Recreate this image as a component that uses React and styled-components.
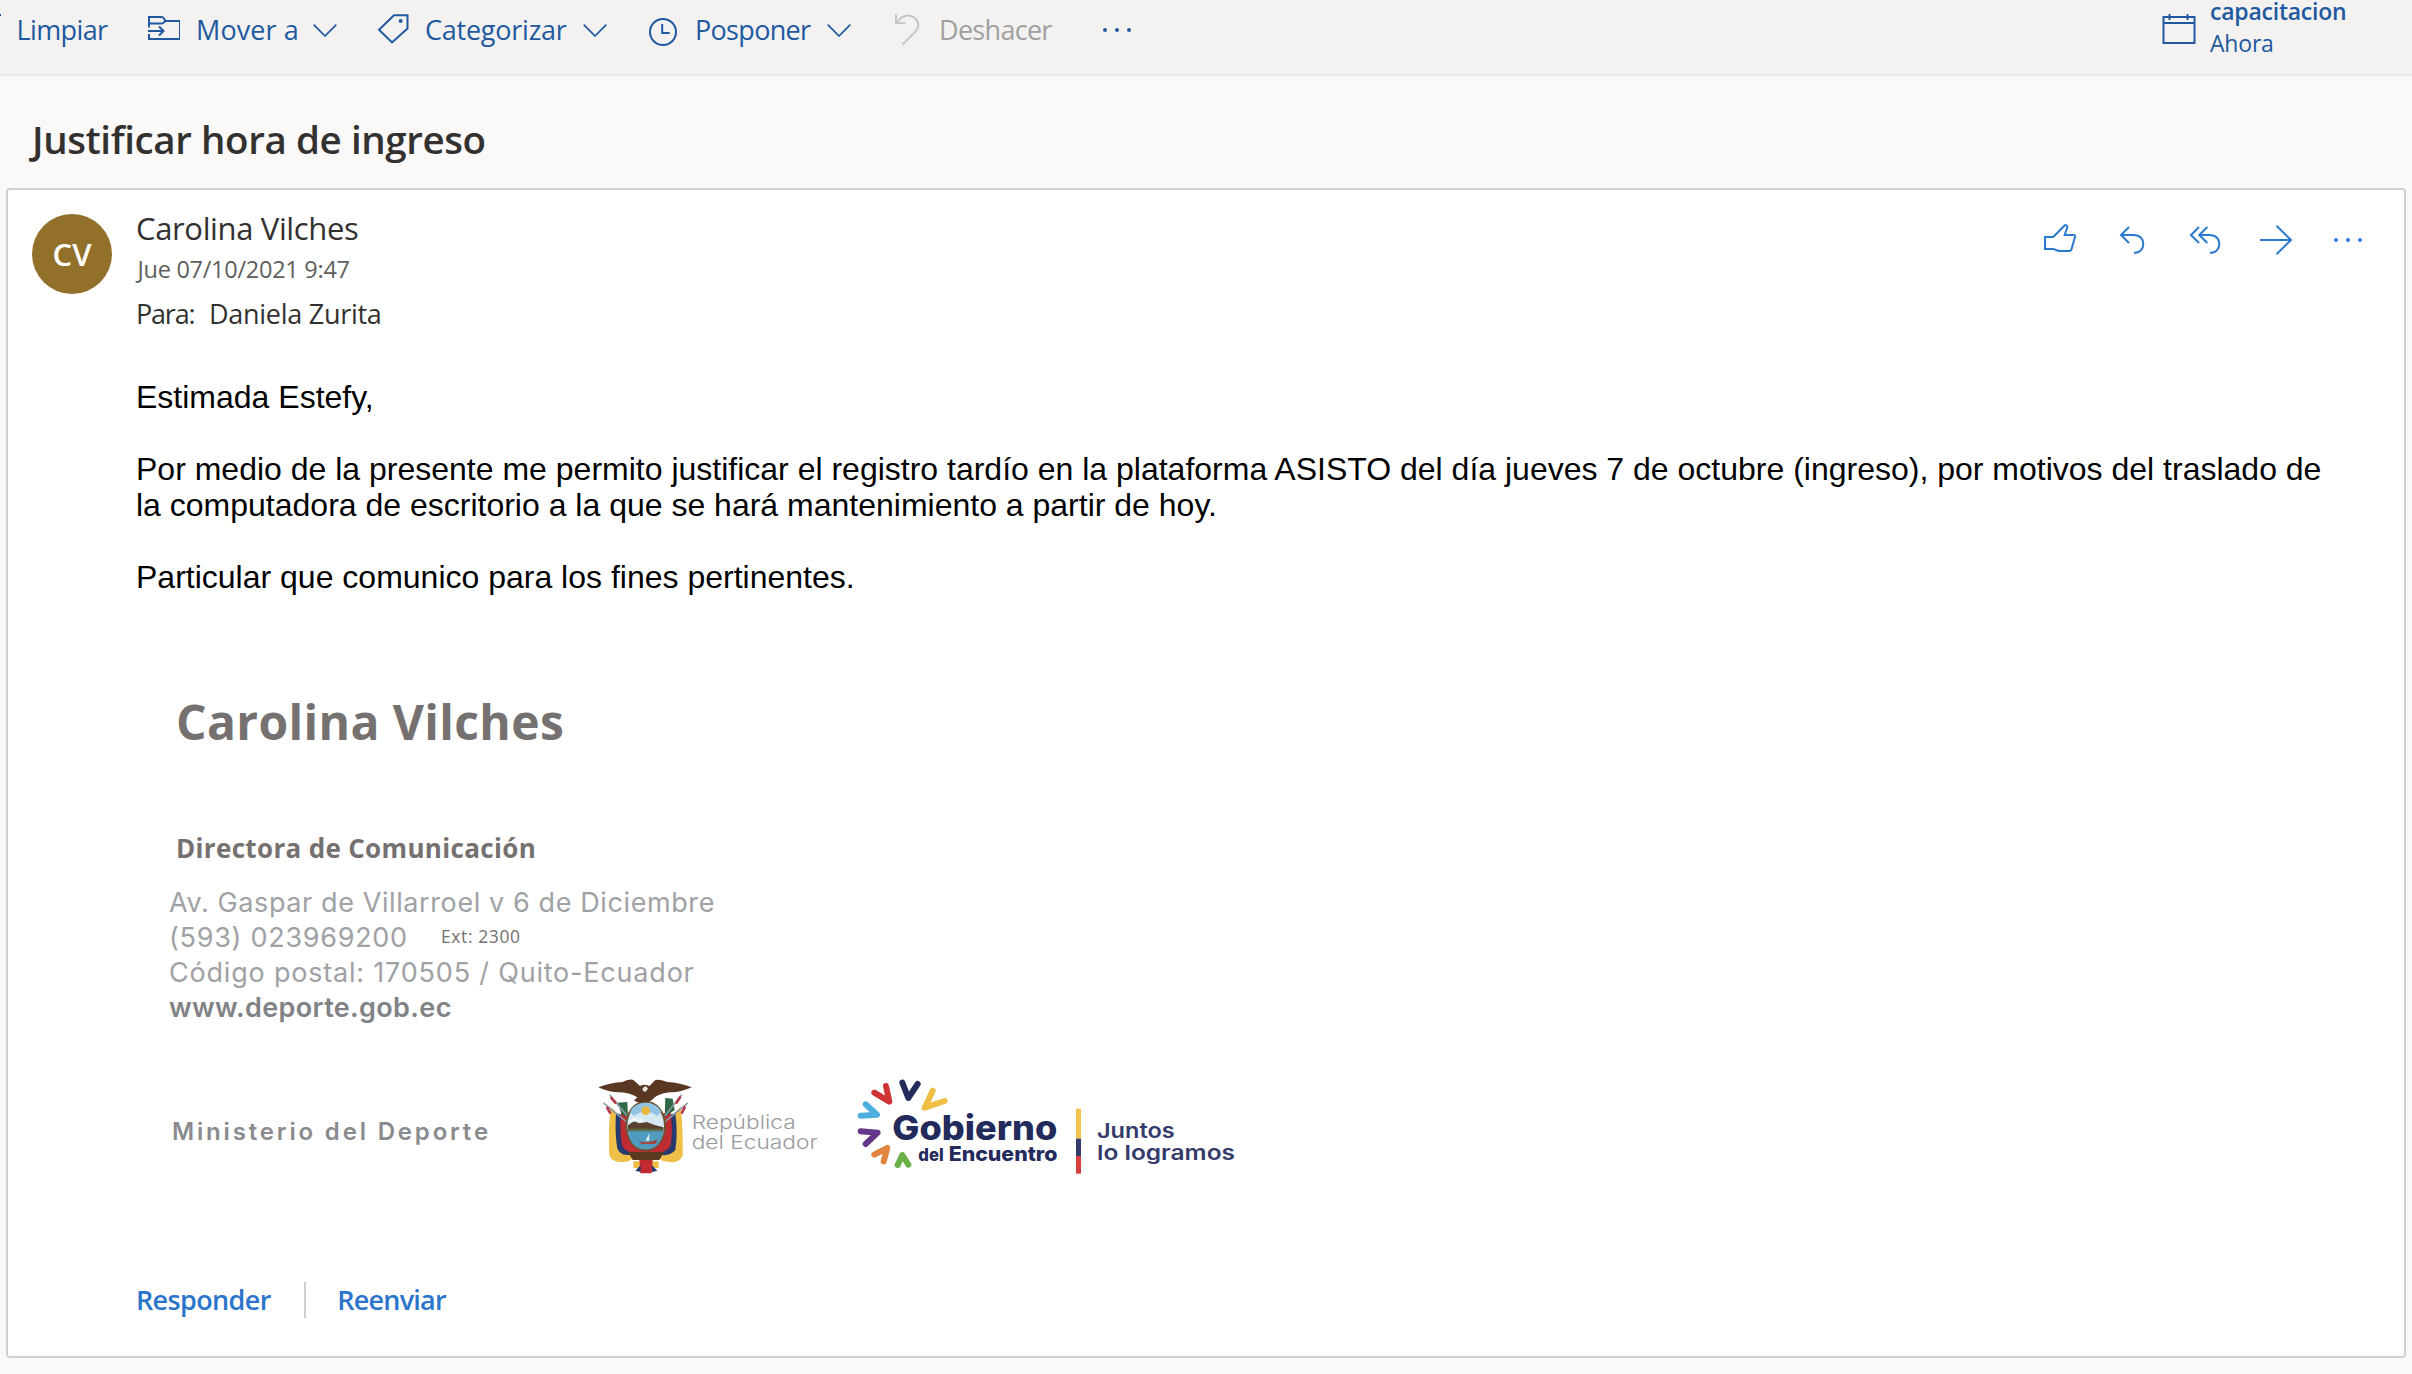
import React from "react";
import styled, { createGlobalStyle } from "styled-components";

const Global = createGlobalStyle`
  *, *::before, *::after { box-sizing: border-box; }
  html, body { margin: 0; padding: 0; }
  body {
    background: #faf9f8;
    font-family: "Open Sans", "Noto Sans", sans-serif;
    overflow: hidden;
  }
`;

const Page = styled.div`
  width: 100vw;
  height: 100vh;
  display: flex;
  flex-direction: column;
  overflow: hidden;
`;

const Toolbar = styled.header`
  flex: none;
  height: 76px;
  display: flex;
  align-items: flex-start;
  justify-content: space-between;
  padding-right: 64px;
  background: #f3f2f1;
  border-bottom: 2px solid #edebe9;
`;

const Commands = styled.div`
  height: 60px;
  display: flex;
  align-items: center;
  gap: 40px;
`;

const Command = styled.div`
  width: ${(p) => p.$width}px;
  display: flex;
  align-items: center;
  color: ${(p) => (p.$disabled ? "#a19f9d" : "#2159a0")};
`;

const CommandIcon = styled.svg`
  flex: none;
  width: 32px;
  height: 32px;
  margin-right: 16px;
  fill: none;
  stroke: ${(p) => p.$tone || "currentColor"};
  stroke-width: 2;
`;

const BroomTip = styled.svg`
  flex: none;
  width: 1px;
  height: 32px;
  margin-right: 15.5px;
  fill: currentColor;
`;

const CommandLabel = styled.span`
  font-size: 27px;
  line-height: 40px;
  white-space: nowrap;
  letter-spacing: ${(p) => p.$track || 0}px;
`;

const Chevron = styled.svg`
  flex: none;
  width: 24px;
  height: 13px;
  margin-left: auto;
  fill: none;
  stroke: currentColor;
  stroke-width: 1.7;
`;

const Reminder = styled.div`
  display: flex;
  width: 186px;
  gap: 14px;
  color: #2159a0;
`;

const CalendarIcon = styled.svg`
  flex: none;
  width: 34px;
  height: 32px;
  margin-top: 14px;
  fill: none;
  stroke: currentColor;
  stroke-width: 2;
`;

const ReminderText = styled.div`
  display: flex;
  flex-direction: column;
  margin-top: -5px;
`;

const ReminderLine = styled.span`
  font-size: 23px;
  line-height: 32px;
  white-space: nowrap;
  font-weight: ${(p) => (p.$strong ? 600 : 400)};
  letter-spacing: ${(p) => p.$track || 0}px;
`;

const Subject = styled.h1`
  flex: none;
  margin: 0;
  padding: 36px 0 0 32px;
  height: 112px;
  font-size: 38.5px;
  line-height: 54px;
  font-weight: 600;
  color: #323130;
  letter-spacing: -0.4px;
`;

const Card = styled.article`
  flex: none;
  height: 1170px;
  margin: 0 6px;
  padding: 18px 24px 0;
  display: flex;
  gap: 24px;
  background: #fff;
  border: 2px solid #d0d0d0;
  border-radius: 4px;
`;

const Avatar = styled.div`
  flex: none;
  width: 80px;
  height: 80px;
  margin-top: 6px;
  display: flex;
  align-items: center;
  justify-content: center;
  border-radius: 50%;
  background: #92702a;
  color: #fff;
  font-size: 31px;
  line-height: 40px;
  font-weight: 600;
`;

const Message = styled.div`
  flex: 1;
  min-width: 0;
  display: flex;
  flex-direction: column;
`;

const MessageHead = styled.div`
  display: flex;
  justify-content: space-between;
  align-items: flex-start;
`;

const SenderBlock = styled.div`
  display: flex;
  flex-direction: column;
`;

const Sender = styled.div`
  font-size: 31px;
  line-height: 40px;
  color: #323130;
  letter-spacing: -0.36px;
`;

const SentAt = styled.div`
  margin: 5px 0 0 1.5px;
  font-size: 23.5px;
  line-height: 32px;
  color: #605e5c;
  letter-spacing: -0.27px;
`;

const Recipients = styled.div`
  display: flex;
  margin-top: 11px;
  font-size: 27px;
  line-height: 36px;
  color: #323130;
`;

const Recipient = styled.span`
  width: ${(p) => p.$width || "auto"};
  white-space: nowrap;
  letter-spacing: ${(p) => p.$track || 0}px;
`;

const Actions = styled.div`
  display: flex;
  gap: 40px;
  padding: 16px 16px 0 0;
  color: #2b79d0;
`;

const ActionIcon = styled.svg`
  width: 32px;
  height: 32px;
  overflow: visible;
  fill: none;
  stroke: currentColor;
  stroke-width: 2;
`;

const Body = styled.div`
  margin-top: 47px;
  padding-right: 48px;
  font-family: "Liberation Sans", Arial, sans-serif;
  font-size: 32px;
  line-height: 36px;
  color: #000;
`;

const Paragraph = styled.p`
  margin: 0 0 36px;
`;

const Signature = styled.section`
  display: flex;
  flex-direction: column;
  padding-left: 34px;
  font-family: Inter, "Open Sans", sans-serif;
`;

const SignName = styled.div`
  margin: 61px 0 0 6px;
  font-family: "Open Sans", sans-serif;
  font-weight: 700;
  font-size: 48px;
  line-height: 60px;
  color: #757171;
  letter-spacing: 0.36px;
`;

const SignRole = styled.div`
  margin: 78px 0 0 6px;
  font-family: "Open Sans", sans-serif;
  font-weight: 700;
  font-size: 26px;
  line-height: 36px;
  color: #757171;
  letter-spacing: 0.33px;
`;

const SignLine = styled.div`
  display: flex;
  align-items: flex-start;
  margin-top: ${(p) => p.$gap || 0}px;
  margin-left: -1px;
  font-size: 27px;
  line-height: 35px;
  font-weight: ${(p) => (p.$strong ? 600 : 400)};
  color: ${(p) => (p.$strong ? "#808285" : "#a0a1a4")};
  white-space: pre;
  letter-spacing: ${(p) => p.$track || 0}px;
`;

const Phone = styled.span`
  width: 272px;
`;

const Extension = styled.span`
  font-family: "Open Sans", sans-serif;
  font-size: 17.5px;
  line-height: 33px;
  font-weight: 400;
  color: #757171;
  letter-spacing: 0.6px;
`;

const Logos = styled.div`
  display: flex;
  margin-top: 35px;
`;

const Ministry = styled.div`
  width: 410px;
  padding: 52px 0 0 2px;
  font-size: 24px;
  line-height: 40px;
  font-weight: 600;
  color: #8a8b8e;
  letter-spacing: 2.83px;
`;

const Logo = styled.svg`
  flex: none;
  width: ${(p) => p.$width}px;
  height: 130px;
  font-family: Inter, "Open Sans", sans-serif;
`;

const Footer = styled.footer`
  display: flex;
  align-items: center;
  margin-top: 90px;
`;

const FooterLink = styled.a`
  font-size: 27px;
  line-height: 40px;
  font-weight: 600;
  color: #2b74cc;
  letter-spacing: ${(p) => p.$track || 0}px;
`;

const Divider = styled.span`
  width: 2px;
  height: 36px;
  margin: 0 31.5px 0 33px;
  background: #d0d0d0;
`;

function Dots() {
  return (
    <g fill="currentColor" stroke="none">
      <circle cx="4" cy="16" r="2" />
      <circle cx="16" cy="16" r="2" />
      <circle cx="28" cy="16" r="2" />
    </g>
  );
}

function Down() {
  return (
    <Chevron viewBox="0 0 24 13">
      <path d="M0.7 0.7 12 12 23.3 0.7" />
    </Chevron>
  );
}

function RepublicLogo() {
  return (
    <Logo $width={260} viewBox="0 0 780 390">
      <path d="M92 142Q104 150 118 170H276Q290 150 302 142Q310 210 308 286Q300 310 270 306Q240 304 236 290H160Q154 306 126 306Q96 308 88 286Q84 210 92 142Z" fill="#f0bf48" />
      <path d="M108 160Q120 160 130 170H264Q276 160 286 160Q294 220 286 270Q270 290 240 284H156Q124 290 112 266Q104 220 108 160Z" fill="#273a70" />
      <path d="M124 150Q134 150 140 160H254Q262 146 270 142Q280 210 272 254Q262 282 197 284Q134 282 126 254Q118 210 124 150Z" fill="#bf2b31" />
      <path d="M112 128 142 126 144 172 126 164ZM256 114 278 116 284 150 254 172Z" fill="#2d6a44" />
      <g fill="none" strokeLinecap="round">
        <path d="M90 106 140 166M72 130 138 184M304 106 256 166M322 130 256 184" stroke="#8d98a8" strokeWidth="5" />
        <path d="M94 114l12 14M82 144l8 14M300 112l-10 16M314 142l-8 16" stroke="#b8384a" strokeWidth="8" />
      </g>
      <path d="M160 304h76v20h-76z" fill="#f0bf48" />
      <path d="M178 298h40l-3 42h-34z" fill="#c02a30" />
      <path d="M166 332l16-16v20zM232 332l-16-16v20z" fill="#273a70" />
      <path d="M144 276h108l-14 24H158z" fill="#5a3b22" />
      <ellipse cx="197" cy="198" rx="61" ry="76" fill="#6b5434" />
      <ellipse cx="197" cy="198" rx="55" ry="70" fill="#d5e9f4" />
      <path d="M150 156Q160 130 197 128Q234 130 244 156L232 168Q197 142 162 168Z" fill="#8fc4e4" />
      <circle cx="197" cy="152" r="13" fill="#e9b43c" />
      <path d="M144 196l18-12 16 6 22-4 26 10 24 6v14H143z" fill="#5a4030" />
      <path d="M148 184l14-12 12 8 10-4 12 10-20-2z" fill="#f4f8fa" />
      <path d="M143 206h108q-2 10-6 20H150q-5-10-7-20z" fill="#5b6b4c" />
      <path d="M144 214h106q-8 54-53 54t-53-54z" fill="#4f9cc0" />
      <path d="M178 244q26 8 56-6l-8 14h-42z" fill="#a3453c" />
      <path d="M196 242l12-22v22z" fill="#dfe7ea" />
      <path d="M55 82Q90 68 128 66Q152 56 160 60L180 78Q194 70 208 78L226 60Q240 58 262 66Q300 68 335 82Q300 98 272 97Q244 98 224 112Q212 128 196 126Q176 130 162 122L172 112Q150 98 120 97Q88 98 55 82Z" fill="#593722" />
      <path d="M188 84l10-6 6 8-8 10-8-4z" fill="#e8e2da" />
      <g fill="#9a9b9f" fontSize="56" fontWeight="300">
        <text x="335" y="208" textLength="312" lengthAdjust="spacingAndGlyphs">República</text>
        <text x="335" y="267" textLength="378" lengthAdjust="spacingAndGlyphs">del Ecuador</text>
      </g>
    </Logo>
  );
}

function GovernmentLogo() {
  return (
    <Logo $width={420} viewBox="0 0 1260 390">
      <g fill="none" strokeWidth="18" strokeLinecap="round" strokeLinejoin="round">
        <path d="M187 68 205 114 233 72" stroke="#232a5c" />
        <path d="M138 78 148 125 103 98" stroke="#cf3336" />
        <path d="M278 92 254 143 314 123" stroke="#efbf45" />
        <path d="M77 133 111 164 62 167" stroke="#4faee0" />
        <path d="M62 214 113 218 77 252" stroke="#64378a" />
        <path d="M103 284 142 264 131 304" stroke="#e08440" />
        <path d="M173 315 187 285 205 314" stroke="#6cb048" />
      </g>
      <g fill="#232a5c" fontWeight="800">
        <text x="157" y="240" fontSize="104" textLength="495" lengthAdjust="spacingAndGlyphs">Gobierno</text>
        <text x="235" y="304" fontSize="52" textLength="76" lengthAdjust="spacingAndGlyphs">del</text>
        <text x="326" y="304" fontSize="61" textLength="326" lengthAdjust="spacingAndGlyphs">Encuentro</text>
      </g>
      <path d="M708 146h15v90h-15z" fill="#f2c44c" />
      <path d="M708 236h15v52h-15z" fill="#343b6b" />
      <path d="M708 288h15v53h-15z" fill="#d8403f" />
      <g fill="#343b6b" fontWeight="600" fontSize="62">
        <text x="771" y="234" textLength="233" lengthAdjust="spacingAndGlyphs">Juntos</text>
        <text x="771" y="301" textLength="414" lengthAdjust="spacingAndGlyphs">lo logramos</text>
      </g>
    </Logo>
  );
}

export default function App() {
  return (
    <Page>
      <Global />
      <Toolbar>
        <Commands>
          <Command $width={108}>
            <BroomTip viewBox="0 0 1 32">
              <path d="M0 0h1v2H0z" />
            </BroomTip>
            <CommandLabel $track={-0.61}>Limpiar</CommandLabel>
          </Command>
          <Command $width={189}>
            <CommandIcon viewBox="0 0 32 32">
              <path d="M1 13.5V3h12.5q1.5 0 2.3 1.2L17.5 7h13.7q0.8 0 0.8 0.8V24q0 1-1 1H1v-5" />
              <path d="M1 9.5h12.5q1.5 0 2.3-1L17.5 7" />
              <path d="M0 17h15.5M11 12.5l4.5 4.5-4.5 4.5" />
            </CommandIcon>
            <CommandLabel $track={0.1}>Mover a</CommandLabel>
            <Down />
          </Command>
          <Command $width={230}>
            <CommandIcon viewBox="0 0 32 32">
              <path d="M17 1.2H30.5V14.5L15 28.5 2 15.7Z" />
              <circle cx="23.6" cy="6.9" r="2" fill="currentColor" stroke="none" />
            </CommandIcon>
            <CommandLabel $track={-0.24}>Categorizar</CommandLabel>
            <Down />
          </Command>
          <Command $width={204}>
            <CommandIcon viewBox="0 0 32 32">
              <circle cx="16" cy="18" r="13" />
              <path d="M15.2 10v9h7.5" />
            </CommandIcon>
            <CommandLabel $track={-0.68}>Posponer</CommandLabel>
            <Down />
          </Command>
          <Command $width={170} $disabled>
            <CommandIcon viewBox="0 0 32 32" $tone="#c8c6c4">
              <path d="M5 0v9h9.5M5 9C9 4 12 1.5 16.5 1.5C23 1.5 27.3 6 27.3 11.3C27.3 14 26 16 24 18L11.5 30.5" />
            </CommandIcon>
            <CommandLabel $track={-0.7}>Deshacer</CommandLabel>
          </Command>
          <Command $width={32}>
            <CommandIcon viewBox="0 0 32 32"><Dots /></CommandIcon>
          </Command>
        </Commands>
        <Reminder>
          <CalendarIcon viewBox="0 0 34 32">
            <path d="M1.5 3H32.5V29H1.5ZM1.5 9H32.5M7.5 0V6M25.5 0V6" />
          </CalendarIcon>
          <ReminderText>
            <ReminderLine $strong $track={-0.23}>capacitacion</ReminderLine>
            <ReminderLine $track={-0.2}>Ahora</ReminderLine>
          </ReminderText>
        </Reminder>
      </Toolbar>

      <Subject>Justificar hora de ingreso</Subject>

      <Card>
        <Avatar>CV</Avatar>
        <Message>
          <MessageHead>
            <SenderBlock>
              <Sender>Carolina Vilches</Sender>
              <SentAt>Jue 07/10/2021 9:47</SentAt>
              <Recipients>
                <Recipient $width="73px" $track={-1.2}>Para:</Recipient>
                <Recipient $track={-0.28}>Daniela Zurita</Recipient>
              </Recipients>
            </SenderBlock>
            <Actions>
              <ActionIcon viewBox="0 0 32 32">
                <path d="M1 13H8Q9.3 13 10.3 12L20.3 1.8Q21.5 0.6 22.7 1.5Q23.6 2.2 23.3 3.4L20.7 11H29.8Q31.5 11 31 12.8L27.5 25.2Q27 27 25 27H17Q14.5 27 12.5 26.2Q10 25 8 25H1Z" />
              </ActionIcon>
              <ActionIcon viewBox="0 0 32 32">
                <path d="M13 3 5 11 13 19M5 11H18Q27 11.5 27.3 20Q27 28.5 18 29" />
              </ActionIcon>
              <ActionIcon viewBox="0 0 32 32">
                <path d="M11 3 3 11 11 19M19.3 3 11.3 11 19.3 19M11.3 11H22Q31 11.5 31.3 20Q31 28.5 22 29" />
              </ActionIcon>
              <ActionIcon viewBox="0 0 32 32">
                <path d="M0 16H31M16.5 1.7 31 16 16.5 30.3" />
              </ActionIcon>
              <ActionIcon viewBox="0 0 32 32"><Dots /></ActionIcon>
            </Actions>
          </MessageHead>

          <Body>
            <Paragraph>Estimada Estefy,</Paragraph>
            <Paragraph>
              Por medio de la presente me permito justificar el registro tardío en la plataforma ASISTO del día jueves 7 de octubre (ingreso), por motivos del traslado de la computadora de escritorio a la que se hará mantenimiento a partir de hoy.
            </Paragraph>
            <Paragraph>Particular que comunico para los fines pertinentes.</Paragraph>
          </Body>

          <Signature>
            <SignName>Carolina Vilches</SignName>
            <SignRole>Directora de Comunicación</SignRole>
            <SignLine $gap={19} $track={0.6}>Av. Gaspar de Villarroel v 6 de Diciembre</SignLine>
            <SignLine $track={0.72}>
              <Phone>(593) 023969200</Phone>
              <Extension>Ext: 2300</Extension>
            </SignLine>
            <SignLine $track={0.8}>Código postal: 170505 / Quito-Ecuador</SignLine>
            <SignLine $strong $track={0.36}>www.deporte.gob.ec</SignLine>
            <Logos>
              <Ministry>Ministerio del Deporte</Ministry>
              <RepublicLogo />
              <GovernmentLogo />
            </Logos>
          </Signature>

          <Footer>
            <FooterLink $track={-0.63}>Responder</FooterLink>
            <Divider />
            <FooterLink $track={-0.78}>Reenviar</FooterLink>
          </Footer>
        </Message>
      </Card>
    </Page>
  );
}
